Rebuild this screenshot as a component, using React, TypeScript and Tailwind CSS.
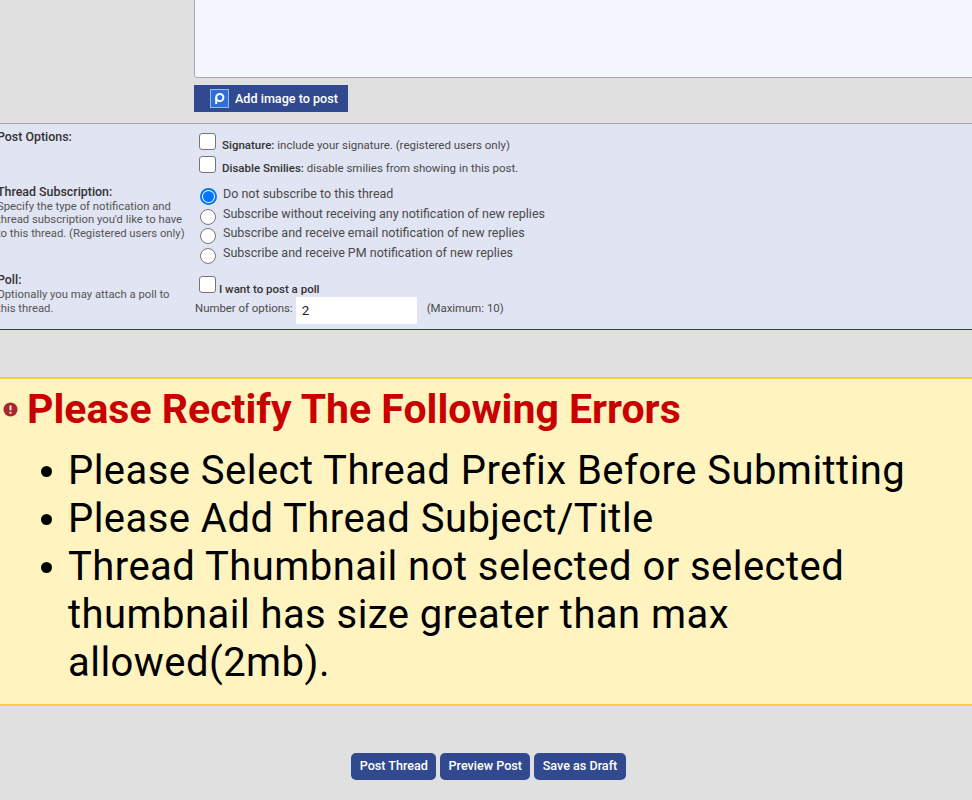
const roboto = "font-['Roboto',sans-serif]";

function Checkbox() {
  return <span className="block h-[17px] w-[17px] shrink-0 rounded-[3px] border border-[#767676] bg-white" />;
}

function Radio({ checked }: { checked?: boolean }) {
  if (checked) {
    return (
      <span className="mt-[2px] flex h-[17px] w-[17px] items-center justify-center rounded-full border-2 border-[#0075ff] bg-white">
        <span className="h-[11px] w-[11px] rounded-full bg-[#0075ff]" />
      </span>
    );
  }
  return <span className="mt-[3px] block h-[16px] w-[16px] rounded-full border border-[#767676] bg-white" />;
}

const subscriptions = [
  "Do not subscribe to this thread",
  "Subscribe without receiving any notification of new replies",
  "Subscribe and receive email notification of new replies",
  "Subscribe and receive PM notification of new replies",
];

const errors = [
  "Please Select Thread Prefix Before Submitting",
  "Please Add Thread Subject/Title",
  "Thread Thumbnail not selected or selected thumbnail has size greater than max allowed(2mb).",
];

export default function App() {
  return (
    <div className={`${roboto} flex h-[800px] w-[972px] flex-col overflow-hidden bg-[#e0e0e0] text-[#4a4a4a]`}>
      <div className="pl-[194px]">
        <div className="mt-[-2px] h-[80px] w-[790px] rounded-[3px] border border-[#a9a9a9] bg-[#f4f6ff]" />
        <button className="mt-[7px] flex h-[27px] w-[154px] items-center bg-[#314a8f] pl-[16px] text-[12.6px] font-medium text-white">
          <span className="mr-[6px] flex h-[19px] w-[19px] items-center justify-center border border-[#9db8ea] bg-[#2f6fdc]">
            <svg width="13" height="13" viewBox="0 0 13 13" fill="none" stroke="white" strokeWidth="2">
              <circle cx="6.8" cy="5.6" r="3.6" />
              <path d="M3.2 5.6V12" />
            </svg>
          </span>
          <span className="pt-px">Add image to post</span>
        </button>
      </div>

      <div className="mt-[11px] h-[207px] border-t border-b border-t-[#a3a3a8] border-b-[#26359c] bg-[#e1e4f2]">
        <div className="flex">
          <div className="ml-[-3px] w-[197px] shrink-0 pt-[5px]">
            <div className="text-[12.4px] leading-[16px] font-medium text-[#333]">Post Options:</div>
            <div className="mt-[39px] text-[12.4px] leading-[16px] font-medium text-[#333]">Thread Subscription:</div>
            <div className="text-[11.3px] leading-[13.3px] text-[#555]">
              Specify the type of notification and
              <br />
              thread subscription you'd like to have
              <br />
              to this thread. (Registered users only)
            </div>
            <div className="mt-[33px] text-[12.4px] leading-[14px] font-medium text-[#333]">Poll:</div>
            <div className="mt-px text-[11.3px] leading-[14px] text-[#555]">
              Optionally you may attach a poll to
              <br />
              this thread.
            </div>
          </div>

          <div className="flex-1 pt-[9px]">
            <div className="flex h-[17px] items-end pl-[5px]">
              <Checkbox />
              <span className="relative top-[2px] ml-[6px] text-[11.5px] leading-[14px]">
                <b className="font-medium text-[#333]">Signature:</b> include your signature. (registered users only)
              </span>
            </div>
            <div className="mt-[6px] flex h-[17px] items-end pl-[5px]">
              <Checkbox />
              <span className="relative top-[2px] ml-[6px] text-[11.5px] leading-[14px]">
                <b className="font-medium text-[#333]">Disable Smilies:</b> disable smilies from showing in this post.
              </span>
            </div>
            <div className="mt-[13px] flex flex-col gap-[3.6px]">
              {subscriptions.map((label, i) => (
                <div key={label} className="flex h-[16px] items-start pl-[6px]">
                  <span className="w-[17px]">
                    <Radio checked={i === 0} />
                  </span>
                  <span className="ml-[6px] text-[12.5px] leading-[15px]">{label}</span>
                </div>
              ))}
            </div>
            <div className="mt-[15px] flex h-[17px] items-end pl-[5px]">
              <Checkbox />
              <span className="relative top-[3px] ml-[3px] text-[11.5px] leading-[13px] font-medium text-[#333]">I want to post a poll</span>
            </div>
            <div className="mt-[4px] flex items-center pl-px text-[11.4px]">
              <span className="pb-[3px]">Number of options:</span>
              <span className="mx-[3px] flex h-[27px] w-[121px] items-center bg-white pl-[6px] text-[13.5px] text-[#222]">2</span>
              <span className="ml-[7px] pb-[3px]">(Maximum: 10)</span>
            </div>
          </div>
        </div>
      </div>

      <div className="mt-[47px] h-[329px] border-y-2 border-[#f7cf3c] bg-[#fff4bf] pt-[5px]">
        <div className="flex items-center pl-[3px]">
          <svg width="15" height="15" viewBox="0 0 15 15">
            <circle cx="7.5" cy="7.5" r="7" fill="#a8262c" />
            <rect x="6.5" y="3.2" width="2" height="5.4" rx="0.8" fill="#f5e6e6" />
            <rect x="6.5" y="9.8" width="2" height="2" fill="#f5e6e6" />
          </svg>
          <h2 className="ml-[9px] text-[41px] leading-[50px] font-bold text-[#c80000]">Please Rectify The Following Errors</h2>
        </div>
        <ul className="mt-[13px] pl-[41px] pr-[40px] text-[40px] leading-[48px] tracking-[0.45px] text-black">
          {errors.map((e) => (
            <li key={e} className="flex">
              <span className="mt-[19px] h-[11px] w-[11px] shrink-0 rounded-full bg-black" />
              <span className="ml-[16px]">{e}</span>
            </li>
          ))}
        </ul>
      </div>

      <div className="mt-[47px] flex justify-center gap-[4px] pl-[5px]">
        {["Post Thread", "Preview Post", "Save as Draft"].map((label) => (
          <button key={label} className="h-[27px] rounded-[5px] bg-[#314a8f] px-[8.3px] text-[12.6px] font-medium text-white">
            {label}
          </button>
        ))}
      </div>
    </div>
  );
}
